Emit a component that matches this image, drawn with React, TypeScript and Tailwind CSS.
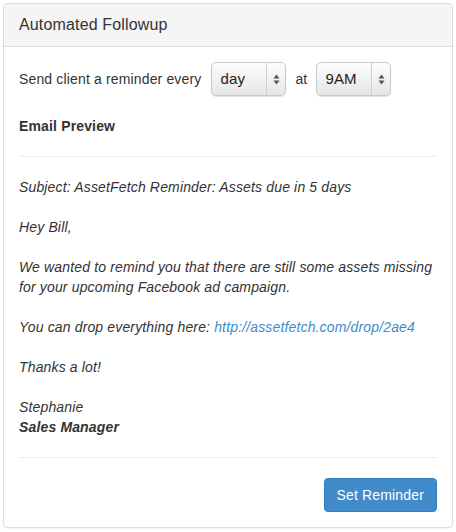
import React from 'react';

function FakeSelect({ value, width }: { value: string; width: string }) {
  return (
    <div className={`flex h-[34px] ${width} items-stretch rounded-[5px] border border-[#c9c9c9] bg-gradient-to-b from-[#fdfdfd] to-[#e6e6e6] shadow-[0_1px_1px_rgba(0,0,0,0.12)]`}>
      <div className="flex flex-1 items-center pl-[8px] text-[15px] text-[#222]">{value}</div>
      <div className="flex w-[19px] items-center justify-center border-l border-[#cfcfcf]">
        <svg width="7" height="11" viewBox="0 0 7 11">
          <path d="M3.5 0.5 L6.5 4.5 L0.5 4.5 Z" fill="#555" />
          <path d="M3.5 10.5 L6.5 6.5 L0.5 6.5 Z" fill="#555" />
        </svg>
      </div>
    </div>
  );
}

export default function App() {
  return (
    <div className="p-[3px] font-['Liberation_Sans',Arial,sans-serif] text-[14px] leading-[20px] tracking-[0.15px] text-[#333]">
      <div className="w-[450px] rounded-[4px] border border-[#dddddd] bg-white shadow-[0_1px_1px_rgba(0,0,0,0.05)]">
        <div className="rounded-t-[3px] border-b border-[#dddddd] bg-[#f5f5f5] px-[15px] py-[10px]">
          <h3 className="text-[16px] leading-[22px] text-[#333]">Automated Followup</h3>
        </div>

        <div className="p-[15px]">
          <div className="flex items-center">
            <span>Send client a reminder every</span>
            <div className="ml-[10px]">
              <FakeSelect value="day" width="w-[75px]" />
            </div>
            <span className="mx-[9px]">at</span>
            <FakeSelect value="9AM" width="w-[75px]" />
          </div>

          <p className="mt-[20px] font-bold">Email Preview</p>
          <hr className="my-[20px] border-t border-[#eeeeee]" />

          <div className="italic">
            <p className="mb-[20px]">Subject: AssetFetch Reminder: Assets due in 5 days</p>
            <p className="mb-[20px]">Hey Bill,</p>
            <p className="mb-[20px]">
              We wanted to remind you that there are still some assets missing for your upcoming Facebook ad campaign.
            </p>
            <p className="mb-[20px]">
              You can drop everything here: <a className="text-[#428bca]">http://assetfetch.com/drop/2ae4</a>
            </p>
            <p className="mb-[20px]">Thanks a lot!</p>
            <p>Stephanie</p>
            <p className="font-bold">Sales Manager</p>
          </div>

          <hr className="my-[20px] border-t border-[#eeeeee]" />

          <div className="flex justify-end">
            <button className="h-[34px] rounded-[4px] border border-[#357ebd] bg-[#428bca] px-[12px] text-[14px] text-white">
              Set Reminder
            </button>
          </div>
        </div>
      </div>
    </div>
  );
}
